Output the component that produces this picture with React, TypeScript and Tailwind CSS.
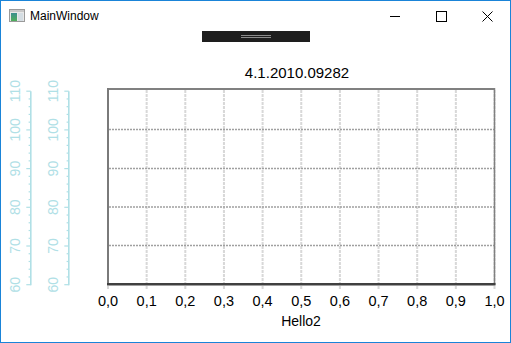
import React from 'react';

const FONT = '"Liberation Sans", Arial, sans-serif';
const AXIS_BLUE = '#b0e0e6';

// value -> y on the left axes
const axisY = (v: number) => 284.7 - (v - 60) * 3.87;
const majors = [60, 70, 80, 90, 100, 110];
const minors = Array.from({ length: 26 }, (_, i) => 60 + i * 2).filter((v) => v % 10 !== 0);

const plotLeft = 108;
const plotRight = 494.5;
const colStep = (plotRight - plotLeft) / 10;
const xTicks = Array.from({ length: 11 }, (_, i) => plotLeft + i * colStep);
const rowLines = [129.5, 168.5, 207, 245.5];

function LeftAxis({ lineX, labelX }: { lineX: number; labelX: number }) {
  return (
    <g>
      <line x1={lineX} y1={axisY(110)} x2={lineX} y2={axisY(60) + 0.5} stroke={AXIS_BLUE} strokeWidth={1.6} />
      {majors.map((v) => (
        <line key={`M${v}`} x1={lineX - 4.5} y1={axisY(v)} x2={lineX} y2={axisY(v)} stroke={AXIS_BLUE} strokeWidth={1.2} />
      ))}
      {minors.map((v) => (
        <line key={`m${v}`} x1={lineX - 2.2} y1={axisY(v)} x2={lineX} y2={axisY(v)} stroke={AXIS_BLUE} strokeWidth={1.2} />
      ))}
      {majors.map((v) => (
        <text
          key={`t${v}`}
          transform={`translate(${labelX} ${axisY(v)}) rotate(-90)`}
          textAnchor="middle"
          fontSize={14}
          fill={AXIS_BLUE}
          fontFamily={FONT}
        >
          {v}
        </text>
      ))}
    </g>
  );
}

function WindowIcon() {
  return (
    <svg width="16" height="14" viewBox="0 0 16 14">
      <rect x="0.5" y="0.5" width="15" height="12" fill="#e8e8e8" stroke="#9a9a9a" />
      <rect x="1" y="1" width="14" height="2" fill="#c8c8c8" />
      <defs>
        <linearGradient id="ic" x1="0" y1="0" x2="0" y2="1">
          <stop offset="0" stopColor="#3b8f8f" />
          <stop offset="1" stopColor="#4fae5a" />
        </linearGradient>
      </defs>
      <rect x="2" y="4" width="6" height="8" fill="url(#ic)" />
      <rect x="9" y="4" width="5" height="8" fill="#d4dde3" />
    </svg>
  );
}

export default function App() {
  return (
    <div
      className="w-[511px] h-[343px] border border-[#1a84d8] bg-white flex flex-col overflow-hidden"
      style={{ fontFamily: FONT }}
    >
      {/* Title bar */}
      <div className="h-[30px] flex items-center shrink-0">
        <div className="pl-2 flex items-center">
          <WindowIcon />
        </div>
        <span className="ml-[5px] text-[12px] text-black leading-none">MainWindow</span>
        <div className="flex-1" />
        <div className="w-[46px] h-full flex items-center justify-center">
          <div className="w-[10px] h-px bg-black" />
        </div>
        <div className="w-[46px] h-full flex items-center justify-center">
          <div className="w-[11px] h-[11px] border border-black" />
        </div>
        <div className="w-[46px] h-full flex items-center justify-center">
          <svg width="11" height="11" viewBox="0 0 11 11">
            <path d="M0.5 0.5 L10.5 10.5 M10.5 0.5 L0.5 10.5" stroke="#000" strokeWidth="1" />
          </svg>
        </div>
      </div>

      {/* Splitter thumb */}
      <div className="flex justify-center shrink-0">
        <div className="w-[108px] h-[11px] bg-[#1e1e1e] flex flex-col items-center justify-center gap-[1px]">
          <div className="w-[30px] h-px bg-[#8c8c8c]" />
          <div className="w-[30px] h-px bg-[#8c8c8c]" />
        </div>
      </div>

      {/* Chart */}
      <svg width="509" height="300" viewBox="0 0 509 300" className="block shrink-0">
        <g transform="translate(-1 -42)">
          <text x={297} y={78} textAnchor="middle" fontSize={15} fill="#000" fontFamily={FONT}>
            4.1.2010.09282
          </text>

          <LeftAxis lineX={30.8} labelX={20} />
          <LeftAxis lineX={68.8} labelX={57.5} />

          {/* grid */}
          {xTicks.map((x, i) => (
            <line
              key={`v${i}`}
              x1={x}
              y1={90}
              x2={x}
              y2={290}
              stroke="#d8d8d8"
              strokeWidth={2}
              strokeDasharray="3 1"
            />
          ))}
          {rowLines.map((y, i) => (
            <line
              key={`h${i}`}
              x1={109}
              y1={y}
              x2={494}
              y2={y}
              stroke="#a0a0a0"
              strokeWidth={1.5}
              strokeDasharray="2 1"
            />
          ))}

          {/* frame */}
          <line x1={108} y1={89} x2={495} y2={89} stroke="#808080" strokeWidth={2} />
          <line x1={108} y1={88} x2={108} y2={285} stroke="#7a7a7a" strokeWidth={2} />
          <line x1={494.5} y1={88} x2={494.5} y2={285} stroke="#808080" strokeWidth={1.5} />
          <line x1={107} y1={284.3} x2={495.5} y2={284.3} stroke="#404040" strokeWidth={2.4} />

          {xTicks.map((x, i) => (
            <text key={`xl${i}`} x={x} y={306} textAnchor="middle" fontSize={14.5} fill="#000" fontFamily={FONT}>
              {(i / 10).toFixed(1).replace('.', ',')}
            </text>
          ))}

          <text x={301} y={325.5} textAnchor="middle" fontSize={14} fill="#000" fontFamily={FONT}>
            Hello2
          </text>
        </g>
      </svg>
    </div>
  );
}
